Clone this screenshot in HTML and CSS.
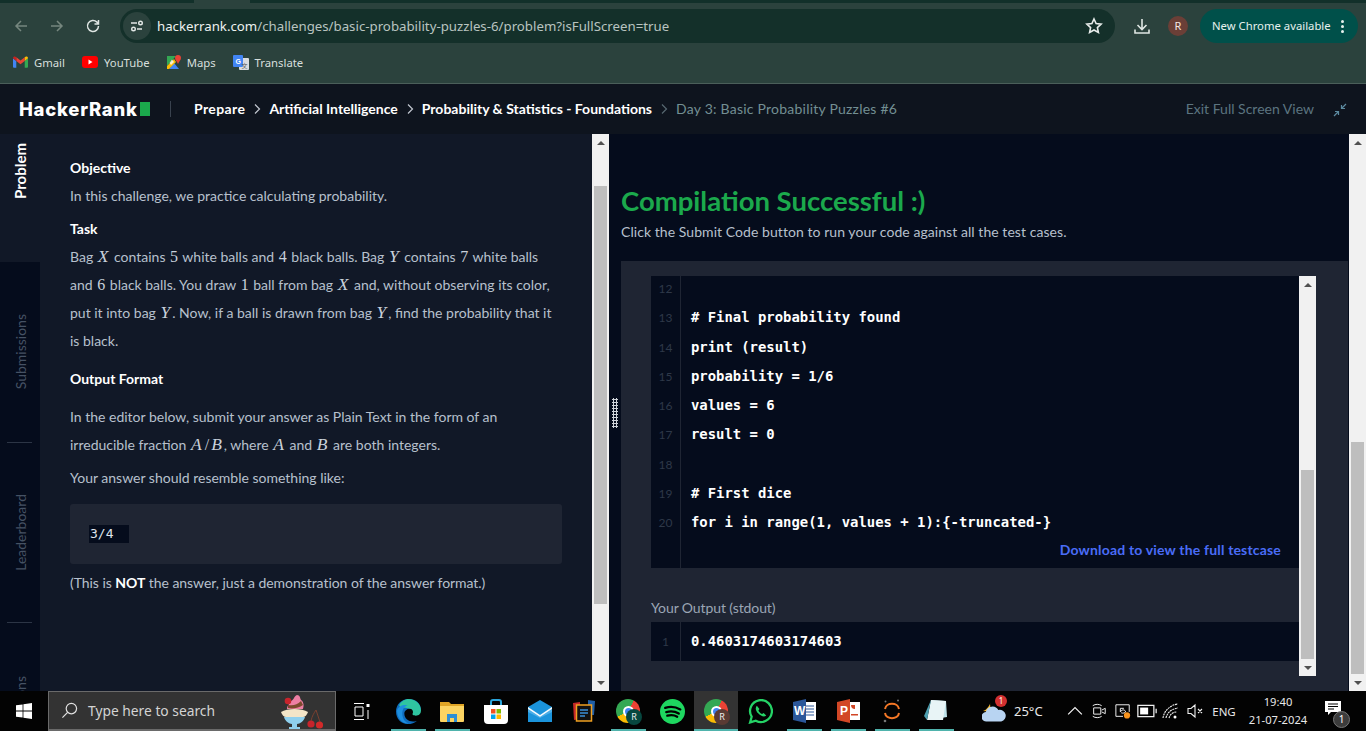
FILE: index.html
```html
<!DOCTYPE html>
<html lang="en">
<head>
    <meta charset="UTF-8">
    <title>Basic Probability Puzzles #6 | HackerRank</title>
    <link rel="stylesheet" href="styles.css">
</head>
<body>

    <div class="browser">
        <div class="tabstrip"><span class="tab-notch"></span></div>
        <div class="toolbar">
            <svg class="nav-icon dim" viewBox="0 0 16 16"><path d="M14 8H3M8 3 3 8l5 5"/></svg>
            <svg class="nav-icon dim" viewBox="0 0 16 16"><path d="M2 8h11M8 3l5 5-5 5"/></svg>
            <svg class="nav-icon" viewBox="0 0 16 16"><path d="M13.5 8a5.5 5.5 0 1 1-1.6-3.9L13.5 6M13.5 2v4h-4"/></svg>
            <div class="omnibox">
                <span class="tune">
                    <svg viewBox="0 0 16 16"><path d="M2 5h6M13 11H8"/><circle cx="11.5" cy="5" r="1.8"/><circle cx="4.5" cy="11" r="1.8"/></svg>
                </span>
                <span class="url"><span class="host">hackerrank.com</span>/challenges/basic-probability-puzzles-6/problem?isFullScreen=true</span>
                <svg class="star" viewBox="0 0 18 18"><path d="m9 2 2.1 4.6 5 .6-3.7 3.4 1 4.9L9 13l-4.4 2.5 1-4.9-3.7-3.4 5-.6z"/></svg>
            </div>
            <svg class="download" viewBox="0 0 18 18"><path d="M9 2v10M4.5 8 9 12.5 13.5 8M2 12.5V16h14v-3.5"/></svg>
            <span class="avatar">R</span>
            <div class="update-pill"><span class="pill-text">New Chrome available</span> <span class="dots"><i></i><i></i><i></i></span></div>
        </div>
        <div class="bookmarks">
            <a class="bookmark">
                <svg viewBox="0 0 16 12" width="15" height="12"><path fill="#4285f4" d="M0 2v9a1 1 0 0 0 1 1h2.5V5z"/><path fill="#34a853" d="M16 2v9a1 1 0 0 1-1 1h-2.5V5z"/><path fill="#ea4335" d="M3.5 5V1L8 4.5 12.5 1v4L8 8.3z"/><path fill="#c5221f" d="M0 2c0-1.7 2-2.5 3.5-1v4z"/><path fill="#fbbc04" d="M16 2c0-1.7-2-2.5-3.5-1v4z"/></svg>
                Gmail
            </a>
            <a class="bookmark">
                <svg viewBox="0 0 16 12" width="16" height="12"><rect width="16" height="12" rx="3" fill="#f00"/><path d="m6.5 3.5 4 2.5-4 2.5z" fill="#fff"/></svg>
                YouTube
            </a>
            <a class="bookmark">
                <svg viewBox="0 0 14 14" width="14" height="14"><path fill="#34a853" d="M0 1h9L0 11z"/><path fill="#4285f4" d="M2 14l5-6 5 6z"/><path fill="#fbbc04" d="M0 11 7 4l2 3-7 7H0z"/><path fill="#fff" d="M5 4.5 7 7 4 10 2.5 8z" opacity=".8"/><path fill="#ea4335" d="M11 0a3 3 0 0 1 3 3c0 2-2 3.5-3 6-1-2.5-3-4-3-6a3 3 0 0 1 3-3z"/></svg>
                Maps
            </a>
            <a class="bookmark">
                <svg viewBox="0 0 16 15" width="16" height="15"><rect x="6" y="3" width="10" height="12" rx="1" fill="#dadce0"/><rect width="10" height="12" rx="1" fill="#4285f4"/><text x="2.5" y="8.5" class="translate-g">G</text><text x="11.5" y="12.5" class="translate-a">文</text></svg>
                Translate
            </a>
        </div>
    </div>

    <header class="hr-header">
        <div class="logo">HackerRank<span class="logo-block"></span></div>
        <span class="logo-sep"></span>
        <nav class="crumbs">
            <a>Prepare</a>
            <svg class="chev" viewBox="0 0 10 12"><path d="m3 1.5 4.5 4.5L3 10.5"/></svg>
            <a>Artificial Intelligence</a>
            <svg class="chev" viewBox="0 0 10 12"><path d="m3 1.5 4.5 4.5L3 10.5"/></svg>
            <a>Probability &amp; Statistics - Foundations</a>
            <svg class="chev last" viewBox="0 0 10 12"><path d="m3 1.5 4.5 4.5L3 10.5"/></svg>
            <span class="crumb-current">Day 3: Basic Probability Puzzles #6</span>
        </nav>
        <a class="exit-full">Exit Full Screen View</a>
        <svg class="exit-icon" viewBox="0 0 14 14"><path d="M13 1 8.5 5.5M8.5 2v3.5H12M1 13l4.5-4.5M5.5 12V8.5H2"/></svg>
    </header>

    <main class="workspace">
        <aside class="side-tabs">
            <div class="side-tab active"><span>Problem</span></div>
            <div class="side-tab tall"><span>Submissions</span></div>
            <div class="side-tab tall"><span>Leaderboard</span></div>
            <div class="side-tab tall"><span>Discussions</span></div>
        </aside>

        <section class="problem">
            <p class="title">Objective</p>
            <p class="line first">In this challenge, we practice calculating probability.</p>
            <p class="title task">Task</p>
            <p class="line">Bag <i class="m">X</i> contains <span class="n">5</span> white balls and <span class="n">4</span> black balls. Bag <i class="m">Y</i> contains <span class="n">7</span> white balls and <span class="n">6</span> black balls. You draw <span class="n">1</span> ball from bag <i class="m">X</i> and, without observing its color, put it into bag <i class="m">Y</i>. Now, if a ball is drawn from bag <i class="m">Y</i>, find the probability that it is black.</p>
            <p class="title output-title">Output Format</p>
            <p class="line">In the editor below, submit your answer as Plain Text in the form of an irreducible fraction <i class="m">A</i><span class="n">/</span><i class="m">B</i>, where <i class="m">A</i> and <i class="m">B</i> are both integers.</p>
            <p class="line resemble">Your answer should resemble something like:</p>
            <div class="sample"><code>3/4&nbsp;&nbsp;</code></div>
            <p class="line note">(This is <strong>NOT</strong> the answer, just a demonstration of the answer format.)</p>
        </section>

        <div class="scrollbar">
            <span class="sb-arrow up"></span>
            <div class="sb-track"><div class="sb-thumb left-thumb"></div></div>
            <span class="sb-arrow down"></span>
        </div>

        <section class="results">
            <span class="grip"></span>
            <h1>Compilation Successful :)</h1>
            <p class="results-sub">Click the Submit Code button to run your code against all the test cases.</p>
            <div class="result-panel">
                <div class="result-body">
                    <div class="code-box testcase">
                        <div class="gutter">
                            <div>12</div><div>13</div><div>14</div><div>15</div><div>16</div>
                            <div>17</div><div>18</div><div>19</div><div>20</div>
                        </div>
                        <div class="code">
                            <div>&nbsp;</div>
                            <div># Final probability found</div>
                            <div>print (result)</div>
                            <div>probability = 1/6</div>
                            <div>values = 6</div>
                            <div>result = 0</div>
                            <div>&nbsp;</div>
                            <div># First dice</div>
                            <div>for i in range(1, values + 1):{-truncated-}</div>
                            <a class="download-link">Download to view the full testcase</a>
                        </div>
                    </div>
                    <p class="output-label">Your Output (stdout)</p>
                    <div class="code-box stdout">
                        <div class="gutter"><div>1</div></div>
                        <div class="code"><div>0.4603174603174603</div></div>
                    </div>
                </div>
                <div class="scrollbar inner">
                    <span class="sb-arrow up"></span>
                    <div class="sb-track"><div class="sb-thumb inner-thumb"></div></div>
                    <span class="sb-arrow down"></span>
                </div>
            </div>
        </section>

        <div class="scrollbar">
            <span class="sb-arrow up"></span>
            <div class="sb-track"><div class="sb-thumb right-thumb"></div></div>
            <span class="sb-arrow down"></span>
        </div>
    </main>

    <footer class="taskbar">
        <div class="start">
            <svg viewBox="0 0 16 16" width="16" height="16"><path fill="#fff" d="M0 2.3 6.6 1.4V7.6H0zM7.4 1.3 16 0V7.6H7.4zM0 8.4H6.6V14.6L0 13.7zM7.4 8.4H16V16L7.4 14.7z"/></svg>
        </div>
        <div class="search">
            <svg viewBox="0 0 18 18" width="17" height="17"><circle cx="11" cy="7" r="5.5"/><path d="M7 11 1.5 16.5"/></svg>
            <span class="search-text">Type here to search</span>
            <svg class="cupcake" viewBox="0 0 44 38" width="44" height="38">
                <path d="M30 29c1-5 3-8 5-11 1 4 3 8 4 12" stroke="#7a4030" fill="none"/>
                <circle cx="30" cy="32" r="3.6" fill="#c8242c"/><circle cx="38.5" cy="33" r="3.6" fill="#d22a2a"/>
                <path d="M6 17c0-4 3-5 4-8 3-1 3-5 6-6 3 0 3 3 4 5 3 2 3 6 2 9z" fill="#ee7fa4"/>
                <path d="M7 13c5 1 9 0 13-4l2 4c-4 3-10 4-15 3z" fill="#7c4a2d"/>
                <circle cx="7" cy="9" r="3.3" fill="#c8242c"/>
                <path d="M0 20c6-4 21-4 27 0-1 3-3 5-5 5H5c-2 0-4-2-5-5z" fill="#f3e5c8"/>
                <path d="M3 25h21c-1 4-5 7-8 7v3h3v2H8v-2h3v-3c-3 0-7-3-8-7z" fill="#8fd0ee"/>
            </svg>
        </div>
        <div class="taskview">
            <svg viewBox="0 0 17 17" width="17" height="17"><path d="M1 .5h10M1 16.5h10M2 4h8v9H2zM15 7v9"/><rect x="13.5" y="1" width="3" height="3" fill="#fff" stroke="none"/></svg>
        </div>
        <div class="apps">
            <span class="app open">
                <svg viewBox="0 0 24 24" width="25" height="25"><path fill="#0f6cbd" d="M12 0C5 0 0 5.5 0 12c0 7 5 12 11 12 4 0 7-1 9-3-6 2-12-1-12-7 0-3 3-5 6-5 4 0 9 1 10 2 0-7-5-11-12-11z"/><path fill="#2fc5a0" d="M3 6c2-4 6-6 9-6 7 0 12 5 12 11 0 3-2 5-5 5-2 0-4-1-3-2 1-2 0-5-4-5-4-1-8 0-9-3z"/><path fill="#1d8fe0" d="M1 11c1-4 6-6 10-5-3 1-5 4-5 8 0 4 2 8 6 9.5C6 24 1 18 1 11z"/></svg>
            </span>
            <span class="app open">
                <svg viewBox="0 0 24 22" width="24" height="22"><path fill="#e0a526" d="M0 2h9l2 2h13v4H0z"/><path fill="#fcd462" d="M0 6h24v15a1 1 0 0 1-1 1H1a1 1 0 0 1-1-1z"/><path fill="#2e8fd6" d="M7 14h10v8h-3v-4h-4v4H7z"/></svg>
            </span>
            <span class="app">
                <svg viewBox="0 0 24 25" width="24" height="25"><path d="M7 6V3a2 2 0 0 1 2-2h6a2 2 0 0 1 2 2v3" fill="none" stroke="#2aa5dc" stroke-width="2"/><path fill="#fff" d="M0 6h24v15a4 4 0 0 1-4 4H4a4 4 0 0 1-4-4z"/><path fill="#f25022" d="M7 10h4.5v4.5H7z"/><path fill="#7fba00" d="M12.5 10H17v4.5h-4.5z"/><path fill="#00a4ef" d="M7 15.5h4.5V20H7z"/><path fill="#ffb900" d="M12.5 15.5H17V20h-4.5z"/></svg>
            </span>
            <span class="app">
                <svg viewBox="0 0 24 22" width="24" height="22"><path fill="#1b94dc" d="M0 7 12 0l12 7v15H0z"/><path fill="#fff" d="M0 7l12 8 12-8v2l-12 8L0 9z" opacity=".95"/><path fill="#7cc8f2" d="M0 9l12 8 12-8v3l-12 6L0 12z" opacity=".5"/></svg>
            </span>
            <span class="app">
                <svg viewBox="0 0 24 22" width="24" height="22"><path fill="#c62828" d="M1 3l7-1v17l-6 1z"/><path fill="#1f5fa8" d="M16 0l7 1-1 14h-6z"/><rect x="4.5" y="5" width="15" height="16" fill="#111" stroke="#f0a020" stroke-width="1.5"/><path d="M8 10h8M8 13h8M8 16h5" stroke="#3a8fd8" stroke-width="1.5"/></svg>
            </span>
            <span class="app open">
                <span class="chrome-logo"><span class="chrome-dot"></span></span>
                <span class="profile-badge green-badge">R</span>
            </span>
            <span class="app">
                <svg viewBox="0 0 24 24" width="25" height="25"><circle cx="12" cy="12" r="12" fill="#1ed760"/><path d="M5 8.5c5-1.5 10-1 14.5 1.5M6 12.5c4-1 8.5-.7 12 1.5M7 16c3.5-.8 7-.5 9.5 1" fill="none" stroke="#000" stroke-width="2.2" stroke-linecap="round"/></svg>
            </span>
            <span class="app open active">
                <span class="chrome-logo"><span class="chrome-dot"></span></span>
                <span class="profile-badge brown-badge">R</span>
            </span>
            <span class="app">
                <svg viewBox="0 0 24 24" width="25" height="25"><path d="M2 22.5 3.5 17A10.5 10.5 0 1 1 7.5 20.8z" fill="none" stroke="#25d366" stroke-width="2.2"/><path d="M8.5 6.500c-2 2-1 5 1.500 7.500s5.500 3.800 7.500 1.800l-2.500-2.300-1.500 1c-1.500-.7-3-2.300-3.500-3.500l1-1.500z" fill="#25d366"/></svg>
            </span>
            <span class="app open">
                <svg viewBox="0 0 23 24" width="23" height="24"><path fill="#fff" d="M11 3h12v18H11z"/><path d="M13 7h8M13 10h8M13 13h8M13 16h8" stroke="#2b579a"/><path fill="#2b579a" d="M0 3 13 0v24L0 21z"/><text x="1" y="16" class="office-letter">W</text></svg>
            </span>
            <span class="app open">
                <svg viewBox="0 0 23 24" width="23" height="24"><path fill="#fff" d="M11 3h12v18H11z"/><path fill="#d24726" d="M14 6a4 4 0 0 0 4 4V6zM14 15h7v1.5h-7z"/><path fill="#d24726" d="M0 3 13 0v24L0 21z"/><text x="3" y="16" class="office-letter">P</text></svg>
            </span>
            <span class="app open">
                <svg viewBox="0 0 20 24" width="20" height="24"><path d="M3 10c1-7 13-7 14 0M3 14c1 7 13 7 14 0" fill="none" stroke="#f37726" stroke-width="2"/><circle cx="3.5" cy="2.5" r="1" fill="#777"/><circle cx="16" cy="1.5" r="1" fill="#777"/><circle cx="3" cy="22" r="1.3" fill="#777"/></svg>
            </span>
            <span class="app open">
                <svg viewBox="0 0 24 24" width="24" height="24"><path fill="#bfe3ea" d="M7 1 22 2l1 16-18 3z"/><path fill="#e8f4f6" d="M7 1 22 2l-3 19H3z"/><path fill="#4d9fb0" d="M7 1 0 17l3 4z"/></svg>
            </span>
        </div>
        <div class="weather">
            <svg viewBox="0 0 26 24" width="25" height="24"><path fill="#f5b82e" d="M10 1a8 8 0 0 0 3 12L1 12c4-1 7-6 9-11z"/><path fill="#b8d4f2" d="M5 23a5 5 0 0 1-1-10 7 7 0 0 1 13-2 6 6 0 0 1 3 12z"/></svg>
            <span class="weather-badge">1</span>
            <span class="temp">25°C</span>
        </div>
        <div class="tray">
            <svg class="tray-icon" viewBox="0 0 14 14"><path d="m1 10 6-6 6 6"/></svg>
            <svg class="tray-icon" viewBox="0 0 16 18"><path d="M1 3c3-2 7-2 10 0M1 15c3 2 7 2 10 0M2 5.5h8v7H2zM11 8l4-2v6l-4-2"/></svg>
            <svg class="tray-icon" viewBox="0 0 18 18"><path d="M1 2h15v8M1 2v13h8"/><path d="M10 6 6 6v4M6 10c2-3 5-3 6 0-1 1-3 2-5 1"/><circle cx="13.5" cy="14" r="3.5" fill="#f7931e" stroke="none"/></svg>
            <svg class="tray-icon" viewBox="0 0 18 14"><path d="M1 2h14v10H1zM17 5v4"/><rect x="3" y="4" width="7" height="6" fill="#fff" stroke="none"/></svg>
            <svg class="tray-icon" viewBox="0 0 18 16"><path d="M1 15C2 8 8 2 16 1M4 15c1-5 5-9 12-10M7 15c1-3 3-6 8-6" stroke-dasharray="2 .7"/><circle cx="13" cy="14" r="1.5" fill="#fff" stroke="none"/></svg>
            <svg class="tray-icon" viewBox="0 0 16 16"><path d="M1 5.5h3L8 2v12l-4-3.5H1zM11 6l4 4M15 6l-4 4"/></svg>
            <span class="lang">ENG</span>
            <div class="clock"><span>19:40</span><span>21-07-2024</span></div>
            <div class="notif">
                <svg viewBox="0 0 16 14" width="16" height="14"><path fill="#fff" d="M0 0h16v11H6l-3 3v-3H0z"/><path d="M3 3h10M3 5.5h10M3 8h6" stroke="#000"/></svg>
                <span class="notif-count">1</span>
            </div>
        </div>
    </footer>

</body>
</html>
```

FILE: styles.css
```css
* {
    box-sizing: border-box;
}
html, body {
    margin: 0;
    height: 731px;
    overflow: hidden;
}
body {
    display: flex;
    flex-direction: column;
    font-family: Lato, sans-serif;
    background: #0e141e;
}
p, h1 {
    margin: 0;
}

/* browser chrome */
.browser {
    height: 84px;
    flex: none;
    background: #2b423d;
    border-bottom: 1px solid #4b5f5a;
    font-family: "Noto Sans", sans-serif;
}
.tabstrip {
    height: 3px;
    background: #12302a;
}
.tab-notch {
    display: block;
    width: 56px;
    height: 3px;
    margin-left: 194px;
    background: #2b423d;
}
.toolbar {
    height: 46px;
    display: flex;
    align-items: center;
    padding: 0 7px 0 13px;
}
.nav-icon {
    width: 16px;
    height: 16px;
    margin-right: 20px;
    fill: none;
    stroke: #dfe6e3;
    stroke-width: 1.5;
}
.nav-icon.dim {
    stroke: #76877f;
}
.omnibox {
    width: 995px;
    height: 34px;
    margin-left: -1px;
    margin-right: 18px;
    display: flex;
    align-items: center;
    padding: 0 12px 0 3px;
    border-radius: 17px;
    background: #14302a;
}
.tune {
    width: 28px;
    height: 28px;
    border-radius: 50%;
    background: #2b423d;
    display: flex;
    align-items: center;
    justify-content: center;
}
.tune svg {
    width: 16px;
    height: 16px;
    fill: none;
    stroke: #e3e8e6;
    stroke-width: 1.4;
}
.url {
    margin-left: 6px;
    font-size: 13.25px;
    color: #b9c4c0;
    white-space: nowrap;
    flex: 1;
}
.host {
    color: #eef2f0;
}
.star {
    width: 18px;
    height: 18px;
    fill: none;
    stroke: #e8edeb;
    stroke-width: 1.6;
}
.download {
    width: 18px;
    height: 18px;
    fill: none;
    stroke: #dfe6e3;
    stroke-width: 1.6;
}
.avatar {
    width: 20px;
    height: 20px;
    margin-left: 17px;
    border-radius: 50%;
    background: #6b3f37;
    color: #f3e6e2;
    font-size: 11px;
    text-align: center;
    line-height: 20px;
}
.update-pill {
    width: 158px;
    height: 34px;
    margin-left: 12px;
    padding-left: 12px;
    display: flex;
    align-items: center;
    justify-content: space-between;
    border-radius: 17px;
    background: #00504a;
    color: #e6f1ee;
    font-size: 11.3px;
    white-space: nowrap;
}
.pill-text {
    margin-bottom: 2px;
}
.dots {
    display: flex;
    flex-direction: column;
    gap: 2px;
    margin-right: 14px;
}
.dots i {
    width: 3px;
    height: 3px;
    border-radius: 50%;
    background: #e6f1ee;
}
.bookmarks {
    height: 34px;
    display: flex;
    align-items: center;
    padding: 0 0 8px 13px;
    gap: 17px;
}
.bookmark {
    display: flex;
    align-items: center;
    gap: 6px;
    font-size: 11.3px;
    color: #d7dfdc;
}
.translate-g {
    font: bold 7px "Liberation Sans", sans-serif;
    fill: #fff;
}
.translate-a {
    font: 6px "Noto Sans CJK SC", sans-serif;
    fill: #555;
    text-anchor: middle;
}

/* hackerrank header */
.hr-header {
    height: 50px;
    flex: none;
    display: flex;
    align-items: center;
    padding-left: 19px;
    background: #0e141e;
}
.logo {
    display: flex;
    align-items: center;
    width: 130px;
    flex: none;
    font-family: Inter, sans-serif;
    font-size: 18.5px;
    font-weight: 800;
    letter-spacing: 0.75px;
    color: #fff;
}
.logo-block {
    width: 10px;
    height: 14px;
    margin-left: 2px;
    flex: none;
    background: #1ba94c;
}
.logo-sep {
    width: 1px;
    height: 16px;
    margin-left: 21px;
    background: #39424e;
}
.crumbs {
    display: flex;
    align-items: center;
    margin-left: 23px;
    margin-bottom: 1px;
    font-size: 14px;
    font-weight: 700;
    color: #fff;
    white-space: nowrap;
}
.crumbs a:first-child {
    letter-spacing: 0.4px;
}
.chev {
    width: 10px;
    height: 12px;
    margin: 0 7px;
    fill: none;
    stroke: #c2c7d0;
    stroke-width: 1.2;
}
.chev.last {
    stroke: #576871;
}
.crumb-current {
    color: #738f93;
    font-weight: 400;
    letter-spacing: 0.23px;
}
.exit-full {
    margin-left: auto;
    margin-bottom: 1px;
    font-size: 14px;
    color: #5c7480;
}
.exit-icon {
    width: 14px;
    height: 14px;
    margin: 1px 19px 0 19px;
    fill: none;
    stroke: #5c8aa0;
    stroke-width: 1.2;
}

/* main panes */
.workspace {
    flex: 1;
    min-height: 0;
    display: flex;
    background: #050c1c;
}
.side-tabs {
    width: 40px;
    flex: none;
    overflow: hidden;
    background: #050c1c;
}
.side-tab {
    height: 128px;
    display: flex;
    align-items: center;
    justify-content: center;
    font-size: 14px;
    color: #465264;
}
.side-tab span {
    writing-mode: vertical-rl;
    transform: rotate(180deg);
}
.side-tab.active {
    background: #111827;
    color: #fff;
    font-size: 15px;
    font-weight: 700;
    align-items: flex-start;
    padding-top: 9px;
}
.side-tab.tall {
    height: 180px;
    position: relative;
}
.side-tab.tall + .side-tab.tall::before {
    content: "";
    position: absolute;
    top: 0;
    left: 7px;
    width: 25px;
    height: 1px;
    background: #2c3545;
}

.problem {
    width: 552px;
    flex: none;
    padding: 21px 30px 0;
    background: #111827;
    font-size: 14px;
    color: #b7c0cd;
}
.title {
    font-weight: 700;
    color: #fff;
    line-height: 26px;
}
.title.task {
    margin-top: 6px;
}
.task + .line {
    margin-top: 1px;
}
.title.output-title {
    margin-top: 11px;
}
.line {
    line-height: 28px;
}
.line.first {
    margin-top: 1px;
}
.output-title + .line {
    margin-top: 11px;
}
.line.resemble {
    margin-top: 5px;
}
.line.note {
    margin-top: 5px;
    letter-spacing: -0.05px;
}
.line strong {
    color: #fff;
}
.m, .n {
    font-family: "Liberation Serif", serif;
    line-height: 1;
    color: #c9d1db;
}
.m {
    font-size: 17.5px;
    margin: 0 2px 0 1px;
}
.n {
    font-size: 16px;
    margin: 0 1px;
}
.sample {
    height: 60px;
    margin-top: 12px;
    padding: 21px 19px;
    border-radius: 3px;
    background: #1f2533;
}
.sample code {
    display: block;
    width: fit-content;
    height: 18px;
    padding-left: 1px;
    line-height: 18px;
    background: #050c1c;
    font-family: "DejaVu Sans Mono", monospace;
    font-size: 13px;
    color: #dfe4ec;
}

.scrollbar {
    width: 17px;
    flex: none;
    display: flex;
    flex-direction: column;
    background: #f1f1f1;
}
.sb-arrow {
    height: 17px;
    flex: none;
    display: flex;
    align-items: center;
    justify-content: center;
}
.sb-arrow::before {
    content: "";
    border-left: 4px solid transparent;
    border-right: 4px solid transparent;
}
.sb-arrow.up::before {
    border-bottom: 4px solid #505050;
}
.sb-arrow.down::before {
    border-top: 4px solid #505050;
}
.sb-track {
    flex: 1;
    min-height: 0;
}
.sb-thumb {
    width: 13px;
    margin: 0 auto;
    background: #bebebe;
}
.left-thumb {
    height: 418px;
    margin-top: 35px;
}
.right-thumb {
    height: 232px;
    margin-top: 291px;
}
.inner-thumb {
    height: 189px;
    margin-top: 177px;
}

.results {
    flex: 1;
    min-width: 0;
    position: relative;
    padding: 49px 1px 0 12px;
    display: flex;
    flex-direction: column;
}
.grip {
    position: absolute;
    top: 264px;
    left: 3px;
    width: 6px;
    height: 30px;
    background: radial-gradient(circle at center, #d0d4da 1px, transparent 1.2px) 0 0 / 3px 3px;
}
.results h1 {
    font-size: 27.5px;
    line-height: 35px;
    font-weight: 700;
    color: #1ba94c;
}
.results-sub {
    margin-top: 4px;
    font-size: 14px;
    line-height: 20px;
    letter-spacing: 0.06px;
    color: #b7c0cd;
}
.result-panel {
    flex: 1;
    min-height: 0;
    margin-top: 19px;
    padding: 15px 30px 15px 30px;
    display: flex;
    background: #1f2533;
}
.result-body {
    width: 648px;
    flex: none;
}
.code-box {
    display: flex;
    overflow: hidden;
    background: #050c1c;
    font-family: "DejaVu Sans Mono", monospace;
    font-size: 13.92px;
    font-weight: 700;
    color: #fff;
}
.code-box.testcase {
    height: 292px;
}
.code-box.stdout {
    height: 39px;
}
.gutter {
    width: 30px;
    flex: none;
    border-right: 1px solid #1f2533;
    text-align: center;
    font-family: Lato, sans-serif;
    font-size: 12px;
    font-weight: 400;
    color: #2e3848;
}
.code {
    flex: 1;
    padding-left: 10px;
}
.code div {
    white-space: pre;
}
.testcase .gutter, .testcase .code {
    margin-top: -2px;
}
.testcase .gutter div, .testcase .code div {
    height: 29.25px;
    line-height: 29.25px;
}
.stdout .gutter div, .stdout .code div {
    line-height: 39px;
}
.download-link {
    display: block;
    padding-right: 18px;
    text-align: right;
    font-family: Lato, sans-serif;
    font-size: 14px;
    font-weight: 700;
    line-height: 25px;
    letter-spacing: 0.18px;
    color: #4a6cf7;
}
.output-label {
    margin: 28px 0 2px;
    font-size: 14px;
    line-height: 24px;
    letter-spacing: -0.1px;
    color: #9ba6b5;
}

/* windows taskbar */
.taskbar {
    height: 40px;
    flex: none;
    display: flex;
    align-items: center;
    background: #030303;
    font-family: "Noto Sans", sans-serif;
    color: #e8e8e8;
}
.taskbar > div {
    flex: none;
}
.start {
    width: 48px;
    display: flex;
    justify-content: center;
}
.search {
    width: 288px;
    height: 40px;
    display: flex;
    align-items: center;
    padding-left: 12px;
    background: #333;
    border: 1px solid #6a6a6a;
    border-bottom-width: 2px;
}
.search > svg:first-child {
    fill: none;
    stroke: #e0e0e0;
    stroke-width: 1.3;
}
.search-text {
    margin-left: 10px;
    font-size: 13.8px;
    color: #d4d4d4;
}
.cupcake {
    margin-left: auto;
    margin-right: 10px;
}
.taskview {
    width: 50px;
    display: flex;
    padding-left: 17px;
}
.taskview svg {
    fill: none;
    stroke: #fff;
}
.apps {
    display: flex;
    width: 572px;
}
.app {
    width: 44px;
    height: 40px;
    position: relative;
    display: flex;
    align-items: center;
    justify-content: center;
}
.app.open::after {
    content: "";
    position: absolute;
    left: 5px;
    right: 4px;
    bottom: 0;
    height: 2px;
    background: #4fb3ac;
}
.app.active {
    background: #333;
}
.app.active::after {
    left: 0;
    right: 0;
}
.chrome-logo {
    width: 24px;
    height: 24px;
    border-radius: 50%;
    display: flex;
    align-items: center;
    justify-content: center;
    background: conic-gradient(from 30deg, #ea4335 0 120deg, #fbbc04 120deg 210deg, #34a853 210deg 360deg);
}
.chrome-dot {
    width: 11px;
    height: 11px;
    border-radius: 50%;
    background: #4285f4;
    border: 2px solid #fff;
}
.profile-badge {
    position: absolute;
    right: 8px;
    bottom: 6px;
    width: 16px;
    height: 16px;
    border-radius: 50%;
    font-size: 9px;
    line-height: 16px;
    text-align: center;
    color: #eee;
}
.green-badge {
    background: #07473f;
}
.brown-badge {
    background: #5a3a33;
}
.office-letter {
    font: bold 12px "Liberation Sans", sans-serif;
    fill: #fff;
}
.weather {
    width: 81px;
    margin-left: 24px;
    position: relative;
    display: flex;
    align-items: center;
    gap: 7px;
}
.weather-badge {
    position: absolute;
    left: 13px;
    top: -4px;
    width: 12px;
    height: 12px;
    border-radius: 50%;
    background: #d23030;
    font-size: 8px;
    line-height: 12px;
    text-align: center;
    color: #fff;
}
.temp {
    font-size: 13px;
}
.tray {
    width: 303px;
    display: flex;
    align-items: center;
}
.tray-icon {
    width: 24px;
    height: 16px;
    flex: none;
    fill: none;
    stroke: #f0f0f0;
    stroke-width: 1.1;
}
.lang {
    width: 34px;
    text-align: center;
    font-size: 11.5px;
}
.clock {
    width: 60px;
    margin-left: 7px;
    padding-bottom: 2px;
    display: flex;
    flex-direction: column;
    align-items: center;
    gap: 3px;
    font-size: 11.2px;
    line-height: 15px;
    white-space: nowrap;
}
.notif {
    width: 26px;
    height: 40px;
    margin-left: 17px;
    position: relative;
    display: flex;
    align-items: center;
}
.notif svg {
    margin-bottom: 6px;
}
.notif-count {
    position: absolute;
    left: 8px;
    top: 20px;
    width: 17px;
    height: 17px;
    border-radius: 50%;
    background: #3c3c3c;
    border: 1px solid #777;
    font-size: 10px;
    line-height: 15px;
    text-align: center;
    color: #fff;
}
```
